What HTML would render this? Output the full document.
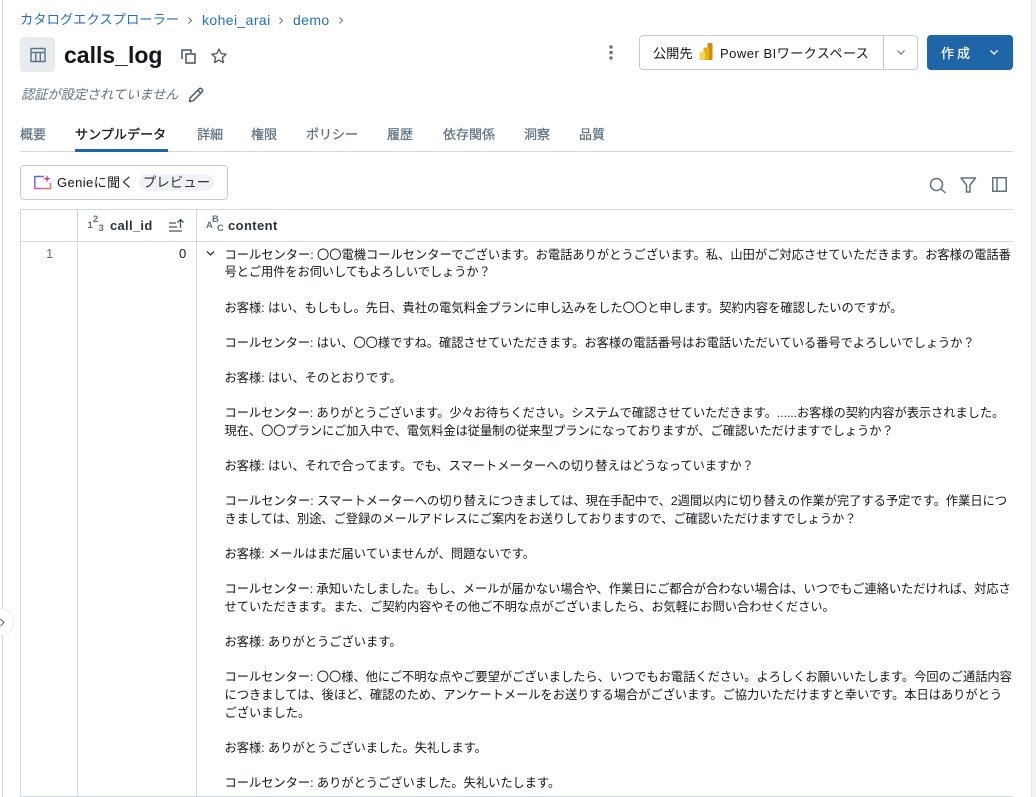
<!DOCTYPE html>
<html lang="ja"><head><meta charset="utf-8">
<style>
html,body{margin:0;padding:0;background:#fff;}
body{width:1036px;height:797px;position:relative;overflow:hidden;font-family:"Liberation Sans","Noto Sans CJK JP",sans-serif;color:#11171c;font-size:13px;}
.a{position:absolute;white-space:nowrap;}
.l{position:absolute;left:224.5px;white-space:nowrap;font-size:12.25px;line-height:18px;height:18px;color:#11171c;margin-top:1px;}
.tab{position:absolute;top:126px;font-size:13px;line-height:18px;color:#5f7281;white-space:nowrap;font-weight:400;-webkit-text-stroke:.25px #5f7281;}
.ln{position:absolute;background:#cfd7e0;}
.bc{font-size:13.3px;line-height:18px;color:#2272b4;top:11px;}
.bl{font-size:14px;letter-spacing:.4px;}
.g{position:absolute;font-size:9.5px;line-height:12px;font-weight:700;color:#5f7281;}
svg{position:absolute;overflow:visible;}
</style></head><body>
<div class="ln" style="left:2px;top:0;width:1px;height:797px;"></div>
<div class="a" style="left:1031px;top:0;width:5px;height:797px;background:#f1f3f6;border-left:1px solid #e4e8ed;box-sizing:border-box;"></div>

<div class="a bc" style="left:20px;">カタログエクスプローラー</div>
<svg style="left:186px;top:16px" width="8" height="9" viewBox="0 0 8 9"><path d="M2.500 1.500 5.500 4.500 2.500 7.500" fill="none" stroke="#5f7281" stroke-width="1"/></svg>
<div class="a bc bl" style="left:202px;">kohei_arai</div>
<svg style="left:277px;top:16px" width="8" height="9" viewBox="0 0 8 9"><path d="M2.500 1.500 5.500 4.500 2.500 7.500" fill="none" stroke="#5f7281" stroke-width="1"/></svg>
<div class="a bc bl" style="left:293px;">demo</div>
<svg style="left:337px;top:16px" width="8" height="9" viewBox="0 0 8 9"><path d="M2.500 1.500 5.500 4.500 2.500 7.500" fill="none" stroke="#5f7281" stroke-width="1"/></svg>

<div class="a" style="left:20px;top:37px;width:35px;height:35px;background:#e8ecf0;border-radius:4px;"></div>
<svg style="left:30px;top:47px" width="16" height="16" viewBox="0 0 16 16"><path d="M1 1.500h14v13H1zM1 5.500h14M5.700 5.500v9M10.300 5.500v9" fill="none" stroke="#5f7281" stroke-width="1.400"/></svg>
<div class="a" style="left:64px;top:40px;font-size:23px;line-height:30px;font-weight:700;color:#11171c;">calls_log</div>
<svg style="left:181px;top:49px" width="15" height="15" viewBox="0 0 15 15"><path d="M1 10V1h9v3M5 5h9v9H5z" fill="none" stroke="#445461" stroke-width="1.500"/></svg>
<svg style="left:210px;top:47px" width="18" height="18" viewBox="0 0 18 18"><path d="M9 2l2.100 4.600 5 .6-3.700 3.400 1 5L9 13.100 4.600 15.600l1-5L1.900 7.200l5-.6z" fill="none" stroke="#445461" stroke-width="1.300" stroke-linejoin="round"/></svg>

<div class="a" style="left:21px;top:86px;font-size:13.2px;line-height:18px;color:#5f7281;font-style:italic;">認証が設定されていません</div>
<svg style="left:188px;top:87px" width="16" height="16" viewBox="0 0 16 16"><path d="M1.500 14.500l.8-3.800L11.300 1.700a1.500 1.500 0 0 1 2.100 0l.9.9a1.500 1.500 0 0 1 0 2.100L5.300 13.700zM9.800 3.200l3 3" fill="none" stroke="#4f606e" stroke-width="1.500" stroke-linejoin="round"/></svg>

<div class="tab" style="left:20px;">概要</div>
<div class="tab" style="left:75px;color:#11171c;font-size:13.1px;-webkit-text-stroke:.3px #11171c;">サンプルデータ</div>
<div class="tab" style="left:197px;">詳細</div>
<div class="tab" style="left:251px;">権限</div>
<div class="tab" style="left:306px;">ポリシー</div>
<div class="tab" style="left:387px;">履歴</div>
<div class="tab" style="left:443px;">依存関係</div>
<div class="tab" style="left:524px;">洞察</div>
<div class="tab" style="left:579px;">品質</div>
<div class="ln" style="left:20px;top:151px;width:993px;height:1px;"></div>
<div class="a" style="left:75px;top:149px;width:93px;height:3px;background:#2067a8;"></div>

<svg style="left:608px;top:44px" width="6" height="18" viewBox="0 0 6 18"><circle cx="3" cy="3" r="1.700" fill="#5f7281"/><circle cx="3" cy="8.500" r="1.700" fill="#5f7281"/><circle cx="3" cy="14" r="1.700" fill="#5f7281"/></svg>
<div class="a" style="left:639px;top:35px;width:279px;height:35px;box-sizing:border-box;border:1px solid #c3ccd6;border-radius:4px;"></div>
<div class="ln" style="left:883px;top:35px;width:1px;height:35px;background:#c3ccd6;"></div>
<div class="a" style="left:653px;top:45px;font-size:13.2px;line-height:18px;">公開先</div>
<svg style="left:699px;top:43px" width="14" height="18" viewBox="0 0 14 18"><rect x="8.500" y="0" width="5" height="17" rx=".8" fill="#d08a14"/><rect x="4.500" y="4.500" width="5.500" height="12.500" rx=".8" fill="#eab308"/><rect x="0.500" y="9" width="5.500" height="8" rx=".8" fill="#f6d55c"/></svg>
<div class="a" style="left:720px;top:45px;font-size:13px;line-height:18px;letter-spacing:.5px;">Power BIワークスペース</div>
<svg style="left:895px;top:48px" width="12" height="9" viewBox="0 0 12 9"><path d="M2.500 2.500 6 6l3.500-3.500" fill="none" stroke="#5f7281" stroke-width="1.200"/></svg>
<div class="a" style="left:927px;top:35px;width:86px;height:35px;background:#1f66a9;border-radius:4px;"></div>
<div class="a" style="left:941px;top:45px;font-size:13px;line-height:18px;color:#fff;letter-spacing:3px;font-weight:400;-webkit-text-stroke:.25px #fff;">作成</div>
<svg style="left:988px;top:48px" width="12" height="9" viewBox="0 0 12 9"><path d="M2.500 2.500 6 6l3.500-3.500" fill="none" stroke="#fff" stroke-width="1.300"/></svg>

<div class="a" style="left:20px;top:165px;width:208px;height:35px;box-sizing:border-box;border:1px solid #c3ccd6;border-radius:4px;"></div>
<svg style="left:34px;top:175px" width="18" height="15" viewBox="0 0 18 15"><defs><linearGradient id="g" x1="0" y1="0" x2="1" y2="1"><stop offset="0" stop-color="#4a6ff0"/><stop offset=".5" stop-color="#c24fd8"/><stop offset="1" stop-color="#f5793a"/></linearGradient></defs><path d="M10 1.500H.8v12h15.700V8" fill="none" stroke="url(#g)" stroke-width="1.500"/><path d="M13 0l1 2.700 2.700 1-2.700 1-1 2.700-1-2.700-2.700-1 2.700-1z" fill="#d6409f"/></svg>
<div class="a" style="left:57px;top:174px;font-size:13px;line-height:18px;letter-spacing:.4px;">Genieに聞く</div>
<div class="a" style="left:139px;top:174px;width:75px;height:17px;background:#f0f2f5;border-radius:9px;font-size:13.5px;line-height:18px;text-align:center;color:#2c3640;">プレビュー</div>

<svg style="left:930px;top:178px" width="17" height="16" viewBox="0 0 17 16"><circle cx="6.500" cy="6.500" r="6" fill="none" stroke="#5f7281" stroke-width="1.500"/><path d="M11 11 15.500 15" stroke="#5f7281" stroke-width="1.500"/></svg>
<svg style="left:960px;top:177px" width="16" height="16" viewBox="0 0 16 16"><path d="M1 1h14.500L10 8v7H6.500V8z" fill="none" stroke="#5f7281" stroke-width="1.500" stroke-linejoin="round"/></svg>
<svg style="left:992px;top:177px" width="15" height="15" viewBox="0 0 15 15"><path d="M.8.800h13.400v13.400H.8zM5 .8v13.400" fill="none" stroke="#5f7281" stroke-width="1.500"/></svg>

<div class="ln" style="left:20px;top:209px;width:993px;height:1px;"></div>
<div class="ln" style="left:20px;top:241px;width:993px;height:1px;"></div>
<div class="ln" style="left:20px;top:796px;width:993px;height:1px;"></div>
<div class="ln" style="left:20px;top:209px;width:1px;height:588px;"></div>
<div class="ln" style="left:77px;top:209px;width:1px;height:588px;"></div>
<div class="ln" style="left:196px;top:209px;width:1px;height:588px;"></div>

<div class="g" style="left:87.500px;top:220px;">1</div>
<div class="g" style="left:93px;top:214px;">2</div>
<div class="g" style="left:98.500px;top:223px;">3</div>
<div class="a" style="left:110px;top:217px;font-size:13px;line-height:17px;font-weight:700;color:#2a333c;letter-spacing:.3px;">call_id</div>
<svg style="left:168px;top:218px" width="17" height="15" viewBox="0 0 17 15"><path d="M1 5h7M1 9h8M1 13h13" stroke="#445461" stroke-width="1.300"/><path d="M12.500 10V1.500M9.500 4.500l3-3 3 3" fill="none" stroke="#445461" stroke-width="1.300"/></svg>
<div class="g" style="left:206px;top:220px;">A</div>
<div class="g" style="left:212px;top:214px;">B</div>
<div class="g" style="left:217px;top:223px;">C</div>
<div class="a" style="left:228px;top:217px;font-size:13px;line-height:17px;font-weight:700;color:#2a333c;letter-spacing:.4px;">content</div>

<div class="a" style="left:46px;top:245px;font-size:13px;line-height:18px;color:#5f7281;">1</div>
<div class="a" style="left:179px;top:245px;font-size:13px;line-height:18px;color:#11171c;">0</div>
<svg style="left:205px;top:249px" width="11" height="9" viewBox="0 0 11 9"><path d="M2 2.500 5.500 6 9 2.500" fill="none" stroke="#2a333c" stroke-width="1.300"/></svg>

<div class="l" style="top:245px">コールセンター: 〇〇電機コールセンターでございます。お電話ありがとうございます。私、山田がご対応させていただきます。お客様の電話番</div>
<div class="l" style="top:262px;letter-spacing:-.09px">号とご用件をお伺いしてもよろしいでしょうか？</div>
<div class="l" style="top:298px;letter-spacing:-.02px">お客様: はい、もしもし。先日、貴社の電気料金プランに申し込みをした〇〇と申します。契約内容を確認したいのですが。</div>
<div class="l" style="top:333px;letter-spacing:-.03px">コールセンター: はい、〇〇様ですね。確認させていただきます。お客様の電話番号はお電話いただいている番号でよろしいでしょうか？</div>
<div class="l" style="top:368px">お客様: はい、そのとおりです。</div>
<div class="l" style="top:403px;letter-spacing:-.06px">コールセンター: ありがとうございます。少々お待ちください。システムで確認させていただきます。......お客様の契約内容が表示されました。</div>
<div class="l" style="top:421px;letter-spacing:-.05px">現在、〇〇プランにご加入中で、電気料金は従量制の従来型プランになっておりますが、ご確認いただけますでしょうか？</div>
<div class="l" style="top:456px">お客様: はい、それで合ってます。でも、スマートメーターへの切り替えはどうなっていますか？</div>
<div class="l" style="top:491px">コールセンター: スマートメーターへの切り替えにつきましては、現在手配中で、2週間以内に切り替えの作業が完了する予定です。作業日につ</div>
<div class="l" style="top:509px;letter-spacing:-.06px">きましては、別途、ご登録のメールアドレスにご案内をお送りしておりますので、ご確認いただけますでしょうか？</div>
<div class="l" style="top:544px">お客様: メールはまだ届いていませんが、問題ないです。</div>
<div class="l" style="top:579px;letter-spacing:-.06px">コールセンター: 承知いたしました。もし、メールが届かない場合や、作業日にご都合が合わない場合は、いつでもご連絡いただければ、対応さ</div>
<div class="l" style="top:597px;letter-spacing:-.02px">せていただきます。また、ご契約内容やその他ご不明な点がございましたら、お気軽にお問い合わせください。</div>
<div class="l" style="top:632px">お客様: ありがとうございます。</div>
<div class="l" style="top:667px;letter-spacing:-.03px">コールセンター: 〇〇様、他にご不明な点やご要望がございましたら、いつでもお電話ください。よろしくお願いいたします。今回のご通話内容</div>
<div class="l" style="top:685px;letter-spacing:-.03px">につきましては、後ほど、確認のため、アンケートメールをお送りする場合がございます。ご協力いただけますと幸いです。本日はありがとう</div>
<div class="l" style="top:703px">ございました。</div>
<div class="l" style="top:738px;letter-spacing:-.02px">お客様: ありがとうございました。失礼します。</div>
<div class="l" style="top:773px;letter-spacing:-.02px">コールセンター: ありがとうございました。失礼いたします。</div>

<div class="a" style="left:-14px;top:608px;width:28px;height:28px;box-sizing:border-box;background:#fff;border:1px solid #e8ecf0;border-radius:50%;"></div>
<svg style="left:0;top:618px" width="6" height="9" viewBox="0 0 6 9"><path d="M.5 1 4 4.500.5 8" fill="none" stroke="#5f7281" stroke-width="1.100"/></svg>
</body></html>
